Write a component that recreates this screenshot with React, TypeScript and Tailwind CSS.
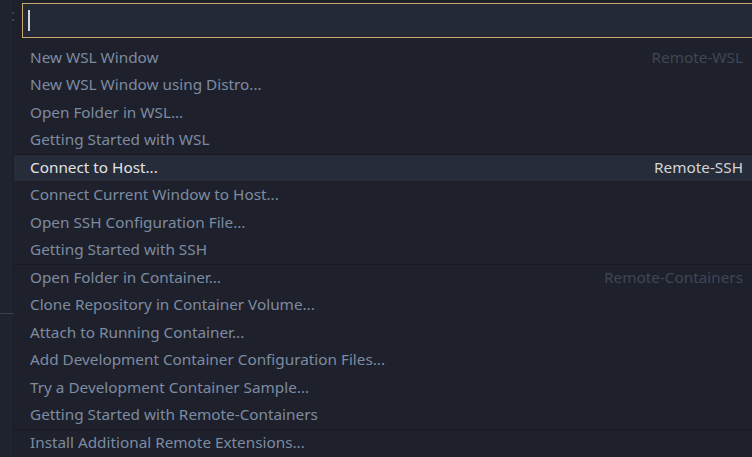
import React from 'react';

interface Item { label: string; detail?: string; sep?: boolean; active?: boolean; }

const ITEMS: Item[] = [
  { label: 'New WSL Window', detail: 'Remote-WSL' },
  { label: 'New WSL Window using Distro...' },
  { label: 'Open Folder in WSL...' },
  { label: 'Getting Started with WSL' },
  { label: 'Connect to Host...', detail: 'Remote-SSH', sep: true, active: true },
  { label: 'Connect Current Window to Host...' },
  { label: 'Open SSH Configuration File...' },
  { label: 'Getting Started with SSH' },
  { label: 'Open Folder in Container...', detail: 'Remote-Containers', sep: true },
  { label: 'Clone Repository in Container Volume...' },
  { label: 'Attach to Running Container...' },
  { label: 'Add Development Container Configuration Files...' },
  { label: 'Try a Development Container Sample...' },
  { label: 'Getting Started with Remote-Containers' },
  { label: 'Install Additional Remote Extensions...', sep: true },
];

export default function App() {
  return (
    <div className="w-[752px] h-[457px] overflow-hidden flex bg-[#1f2330]" style={{ fontFamily: '"Noto Sans", "Open Sans", sans-serif' }}>
      {/* editor behind */}
      <div className="w-[14px] shrink-0 relative border-r border-[#1a1d26]">
        <div className="absolute left-[12px] top-[12px] w-[2px] h-[2px] bg-[#2f4a6a]" />
        <div className="absolute left-[12px] top-[19px] w-[2px] h-[2px] bg-[#2f4a6a]" />
        <div className="absolute left-0 top-[313px] w-[14px] h-px bg-[#3b404b]" />
      </div>

      {/* quick pick */}
      <div className="flex-1 min-w-0 bg-[#1e212b] flex flex-col">
        <div className="pt-[3px] pl-[8px] mr-[-20px] h-[43.5px]">
          <div className="h-[35px] border border-[#c8a96c] bg-[#232936] flex items-center pl-[5px]">
            <div className="w-[2px] h-[21px] bg-[#d6d6d6]" />
          </div>
        </div>
        {ITEMS.map(it => (
          <div
            key={it.label}
            className={`h-[27.5px] shrink-0 flex items-center justify-between pl-[16px] pr-[9px] text-[15.3px] ${it.sep ? 'border-t border-[#171a21]' : ''} ${it.active ? 'bg-[#272c3a] text-[#e2e2e2]' : 'text-[#7d8ba2]'}`}
          >
            <span className="whitespace-nowrap">{it.label}</span>
            {it.detail && (
              <span className={`whitespace-nowrap ${it.active ? 'text-[#d4d4d4]' : 'text-[#3e4657]'}`}>{it.detail}</span>
            )}
          </div>
        ))}
      </div>
    </div>
  );
}
